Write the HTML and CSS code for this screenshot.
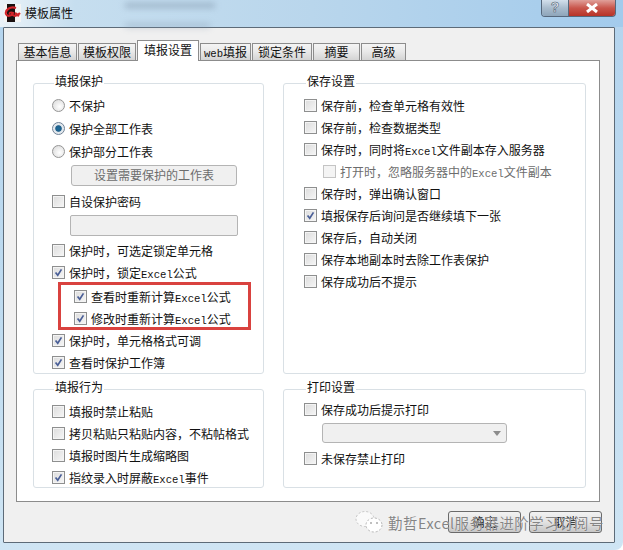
FILE: index.html
```html
<!DOCTYPE html>
<html lang="zh-CN">
<head>
    <meta charset="UTF-8">
    <meta name="viewport" content="width=device-width, initial-scale=1.0">
    <title>模板属性</title>
    <link rel="stylesheet" href="styles.css">
</head>
<body>
    <svg class="defs" width="0" height="0">
        <symbol id="tick" viewBox="0 0 13 13">
            <path d="M3 6.5 L5.6 9.8 L10 2.8" fill="none" stroke="#4a5f97" stroke-width="2"/>
        </symbol>
    </svg>

    <div class="window">
        <!-- Title bar -->
        <div class="titlebar">
            <svg class="app-icon" width="17" height="18" viewBox="0 0 17 18">
                <rect width="17" height="18" fill="#f4f4f4"/>
                <rect x="3" y="0" width="8" height="18" fill="#1a1010"/>
                <path d="M12 4 C6 2 1 6 2 10 C3 13 8 12 9 9 C7 8 5 9 6 10 M8 10 C10 13 13 12 16 9 M11 9 L15 12" fill="none" stroke="#d2232a" stroke-width="2.2"/>
            </svg>
            <span class="title-text">模板属性</span>
            <div class="title-blur blur-top"></div>
            <div class="title-blur blur-bottom"></div>
            <div class="caption-buttons">
                <div class="caption-help">?</div>
                <div class="caption-close">
                    <svg width="14" height="10" viewBox="0 0 14 10">
                        <path d="M2 1 L12 9 M12 1 L2 9" stroke="#fff" stroke-width="3"/>
                    </svg>
                </div>
            </div>
        </div>

        <div class="client">
            <!-- Tabs -->
            <div class="tabs">
                <div class="tab tab-1">基本信息</div>
                <div class="tab tab-2">模板权限</div>
                <div class="tab tab-3 active">填报设置</div>
                <div class="tab tab-4"><span class="lat">web</span>填报</div>
                <div class="tab tab-5">锁定条件</div>
                <div class="tab tab-6">摘要</div>
                <div class="tab tab-7">高级</div>
            </div>

            <div class="panel">
                <div class="groups">
                    <!-- 填报保护 -->
                    <fieldset class="group group-left">
                        <legend>填报保护</legend>
                        <div class="row tall"><span class="radio"></span>不保护</div>
                        <div class="row tall"><span class="radio on"></span>保护全部工作表</div>
                        <div class="row tall"><span class="radio"></span>保护部分工作表</div>
                        <div class="btn-sheet">设置需要保护的工作表</div>
                        <div class="row after-btn"><span class="check"></span>自设保护密码</div>
                        <div class="pwd-input"></div>
                        <div class="row after-input"><span class="check"></span>保护时，可选定锁定单元格</div>
                        <div class="row"><span class="check"><svg><use href="#tick"/></svg></span><span>保护时，锁定<span class="lat">Excel</span>公式</span></div>
                        <div class="red-box">
                            <div class="row"><span class="check"><svg><use href="#tick"/></svg></span><span>查看时重新计算<span class="lat">Excel</span>公式</span></div>
                            <div class="row"><span class="check"><svg><use href="#tick"/></svg></span><span>修改时重新计算<span class="lat">Excel</span>公式</span></div>
                        </div>
                        <div class="row"><span class="check"><svg><use href="#tick"/></svg></span>保护时，单元格格式可调</div>
                        <div class="row"><span class="check"><svg><use href="#tick"/></svg></span>查看时保护工作簿</div>
                    </fieldset>

                    <!-- 保存设置 -->
                    <fieldset class="group group-right">
                        <legend>保存设置</legend>
                        <div class="row"><span class="check"></span>保存前，检查单元格有效性</div>
                        <div class="row"><span class="check"></span>保存前，检查数据类型</div>
                        <div class="row"><span class="check"></span><span>保存时，同时将<span class="lat">Excel</span>文件副本存入服务器</span></div>
                        <div class="row sub disabled"><span class="check"></span><span>打开时，忽略服务器中的<span class="lat">Excel</span>文件副本</span></div>
                        <div class="row"><span class="check"></span>保存时，弹出确认窗口</div>
                        <div class="row"><span class="check"><svg><use href="#tick"/></svg></span>填报保存后询问是否继续填下一张</div>
                        <div class="row"><span class="check"></span>保存后，自动关闭</div>
                        <div class="row"><span class="check"></span>保存本地副本时去除工作表保护</div>
                        <div class="row"><span class="check"></span>保存成功后不提示</div>
                    </fieldset>

                    <!-- 填报行为 -->
                    <fieldset class="group group-left lower">
                        <legend>填报行为</legend>
                        <div class="row"><span class="check"></span>填报时禁止粘贴</div>
                        <div class="row"><span class="check"></span>拷贝粘贴只粘贴内容，不粘帖格式</div>
                        <div class="row"><span class="check"></span>填报时图片生成缩略图</div>
                        <div class="row"><span class="check"><svg><use href="#tick"/></svg></span><span>指纹录入时屏蔽<span class="lat">Excel</span>事件</span></div>
                    </fieldset>

                    <!-- 打印设置 -->
                    <fieldset class="group group-right lower">
                        <legend>打印设置</legend>
                        <div class="row"><span class="check"></span>保存成功后提示打印</div>
                        <div class="print-select"><span class="arrow"></span></div>
                        <div class="row"><span class="check"></span>未保存禁止打印</div>
                    </fieldset>
                </div>
            </div>

            <div class="footer">
                <div class="btn">确定</div>
                <div class="btn">取消</div>
            </div>
        </div>

        <!-- Watermark over the dialog buttons -->
        <div class="watermark">
            <svg width="28" height="24" viewBox="0 0 28 24">
                <ellipse cx="10" cy="9" rx="9" ry="7.5" fill="#fafafa" stroke="#c4c4c4" stroke-dasharray="2 2"/>
                <ellipse cx="19" cy="15" rx="8" ry="7" fill="#fff" stroke="#b4b4b4" stroke-dasharray="2 2"/>
                <circle cx="16" cy="13" r="1" fill="#aaa"/>
                <circle cx="22" cy="13" r="1" fill="#aaa"/>
            </svg>
            <span>勤哲Excel服务器进阶学习订阅号</span>
        </div>
    </div>
</body>
</html>
```

FILE: styles.css
```css
* {
    box-sizing: border-box;
}

html, body {
    margin: 0;
    padding: 0;
    background-color: #fff;
}

body {
    font-family: "Noto Sans CJK SC", "Liberation Sans", sans-serif;
    font-size: 12px;
    color: #111;
}

.defs {
    position: absolute;
}

/* Window frame */
.window {
    position: relative;
    width: 623px;
    height: 550px;
    overflow: hidden;
    background: linear-gradient(#b4d4ee, #c0dcf0 60%, #cfe5f4);
    border-radius: 0 0 8px 0;
}

.titlebar {
    position: relative;
    height: 27px;
    display: flex;
    align-items: center;
    padding: 0 0 2px 4px;
    background: linear-gradient(90deg, #eaf2f8 0, #c6deef 12%, #b9d6ec 50%, #a3cbec 100%);
}

.app-icon {
    margin-right: 4px;
}

.title-text {
    font-size: 12px;
    color: #111;
}

.title-blur {
    position: absolute;
    left: 125px;
    height: 5px;
    width: 90px;
    background-color: #7f93a8;
    filter: blur(3px);
    opacity: .55;
}

.blur-top {
    top: 3px;
}

.blur-bottom {
    top: 23px;
    width: 85px;
    opacity: .35;
}

.caption-buttons {
    position: absolute;
    top: 0;
    left: 541px;
    display: flex;
    height: 17px;
    border: 1px solid #56687c;
    border-top: none;
    border-radius: 0 0 4px 4px;
    overflow: hidden;
}

.caption-help {
    width: 27px;
    text-align: center;
    font-family: "Liberation Sans", sans-serif;
    font-size: 14px;
    font-weight: bold;
    line-height: 15px;
    color: #e8eef4;
    -webkit-text-stroke: .5px #3f5266;
    background: linear-gradient(#d3e0ec, #a9bccd 50%, #8ea5ba);
    border-right: 1px solid #56687c;
}

.caption-close {
    width: 46px;
    display: flex;
    align-items: center;
    justify-content: center;
    background: linear-gradient(#e0a09a, #c9564c 50%, #b73327);
}

/* Dialog client area */
.client {
    width: 612px;
    height: 516px;
    margin-left: 3px;
    padding: 15px 0 0 12px;
    background-color: #f0f0f0;
    border: 1px solid #5d6b78;
    border-radius: 1px;
}

.tabs {
    display: flex;
    height: 17px;
    padding-left: 2px;
    align-items: flex-end;
}

.tab {
    height: 17px;
    line-height: 15px;
    text-align: center;
    margin-right: 1px;
    background: linear-gradient(#f4f4f4, #e8e8e8 50%, #d4d4d4);
    border: 1px solid #8c8c8c;
    border-bottom: none;
}

.tab.active {
    height: 21px;
    line-height: 17px;
    margin-bottom: -1px;
    background: #fff;
    position: relative;
    z-index: 1;
}

.tab-1 { width: 59px; }
.tab-2 { width: 58px; }
.tab-3 { width: 62px; }
.tab-4 { width: 51px; }
.tab-5 { width: 60px; }
.tab-6 { width: 47px; }
.tab-7 { width: 45px; }

.panel {
    width: 584px;
    height: 442px;
    padding: 13px 13px 0 16px;
    background-color: #fff;
    border: 1px solid #8c8c8c;
}

.groups {
    display: grid;
    grid-template-columns: 231px 303px;
    column-gap: 19px;
    row-gap: 6px;
    align-items: start;
}

.group {
    margin: 0;
    padding: 2px 0 0 18px;
    min-width: 0;
    height: 300px;
    border: 1px solid #d9e0e5;
    border-radius: 3px;
}

.group-right {
    padding-left: 20px;
}

.group.lower {
    height: 108px;
    padding-top: 2px;
}

.group-right.lower {
    padding-top: 0;
}

/* legend is taller than its text so the border runs just under the text */
.group legend {
    margin-left: 2px;
    padding: 0 1px;
    height: 18px;
    line-height: 14px;
    font-size: 12px;
}

/* Option rows */
.row {
    display: flex;
    align-items: center;
    height: 22px;
    white-space: nowrap;
}

.row.tall {
    height: 23px;
}

.row.sub {
    padding-left: 19px;
}

.disabled {
    color: #6d6d6d;
}

.lat {
    font-family: "Liberation Mono", monospace;
    font-size: 10.6px;
}

.check {
    flex: none;
    width: 13px;
    height: 13px;
    margin-right: 4px;
    border: 1px solid #8e8f8f;
    background: linear-gradient(135deg, #dcdcdc, #f6f6f6);
    box-shadow: inset 0 0 0 1px #f4f4f4;
}

.check svg {
    display: block;
    width: 11px;
    height: 11px;
}

.disabled .check {
    border-color: #c4c4c4;
    background: #f4f4f4;
}

.radio {
    flex: none;
    width: 13px;
    height: 13px;
    margin-right: 4px;
    border: 1px solid #959595;
    border-radius: 50%;
    background: radial-gradient(circle at 60% 60%, #fff, #d6d6d6);
}

.radio.on {
    border-color: #6f8196;
    background: radial-gradient(circle, #1b6a9a 0, #1f5f8a 36%, #dfe6ec 48%, #f2f2f2 100%);
}

.btn-sheet {
    width: 166px;
    height: 21px;
    margin: 2px 0 0 19px;
    line-height: 18px;
    text-align: center;
    color: #6d6d6d;
    background-color: #f0f0f0;
    border: 1px solid #b4b4b4;
    border-radius: 3px;
}

.row.after-btn {
    margin-top: 4px;
}

.pwd-input {
    width: 168px;
    height: 21px;
    margin: 3px 0 0 18px;
    background-color: #f0f0f0;
    border: 1px solid #b4b4b4;
    border-radius: 2px;
}

.row.after-input {
    margin-top: 3px;
}

/* Red annotation round the two sub options */
.red-box {
    width: 193px;
    height: 48px;
    margin: -1px 0 -1px 6px;
    padding-left: 13px;
    border: 3px solid #d9423f;
}

.print-select {
    position: relative;
    width: 185px;
    height: 20px;
    margin: 3px 0 4px 18px;
    background-color: #f0f0f0;
    border: 1px solid #b4b4b4;
    border-radius: 3px;
}

.arrow {
    position: absolute;
    right: 5px;
    top: 7px;
    border: 4px solid transparent;
    border-top: 5px solid #8c8c8c;
}

/* Bottom buttons */
.footer {
    display: flex;
    gap: 8px;
    margin: 9px 0 0 432px;
}

.btn {
    width: 73px;
    height: 22px;
    line-height: 19px;
    text-align: center;
    background: linear-gradient(#f2f2f2, #e2e2e2 50%, #c6c6c6);
    border: 1px solid #6a6a6a;
    border-radius: 3px;
}

/* Watermark */
.watermark {
    position: absolute;
    left: 355px;
    top: 510px;
    display: flex;
    align-items: center;
    gap: 5px;
    font-size: 14.4px;
    letter-spacing: .55px;
    color: #858585;
    text-shadow: 0 0 1px #fff;
    white-space: nowrap;
}
```
